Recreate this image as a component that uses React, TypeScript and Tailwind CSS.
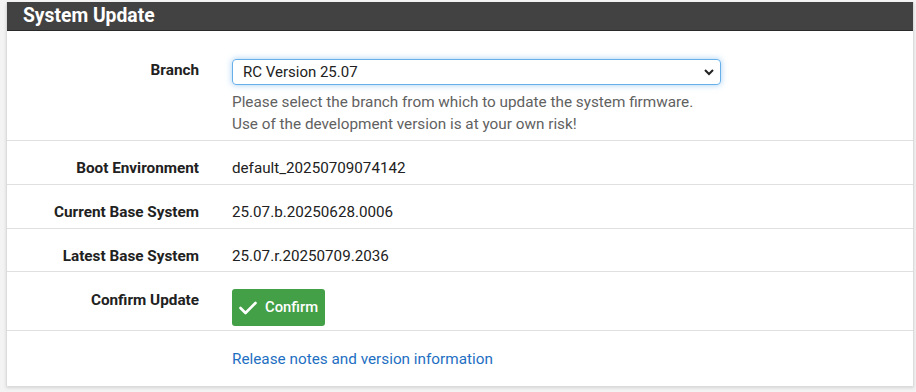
import React from "react";

function Row({ label, children, className }: { label?: string; children: React.ReactNode; className: string }) {
  return (
    <div className={`flex border-b border-[#e0e0e0] ${className}`}>
      <div className="w-[192px] text-right font-bold text-[15.3px] leading-[20px] text-[#212121]">{label}</div>
      <div className="ml-[33px] flex-1">{children}</div>
    </div>
  );
}

export default function App() {
  return (
    <div
      className="w-[916px] h-[392px] bg-[#f3f3f3] pt-[2px] pl-[6px] overflow-hidden"
      style={{ fontFamily: "Roboto, 'Liberation Sans', sans-serif" }}
    >
      <div className="w-[908px] bg-white border-l border-r border-[#dcdcdc] shadow-[0_2px_3px_rgba(0,0,0,0.12)]">
        <div className="h-[29px] bg-[#424242] border-b border-[#2a2a2a] flex items-center pl-[16px]">
          <span className="text-white font-bold text-[19.3px] leading-none">System Update</span>
        </div>
        <Row label="Branch" className="h-[110px] pt-[29px]">
          <div className="-mt-[1px]">
            <div className="w-[489px] h-[26px] rounded-[4px] border border-[#66afe9] shadow-[0_0_6px_rgba(102,175,233,0.6)] flex items-center justify-between pl-[10px] pr-[6px]">
              <span className="text-[15px] text-[#212121]">RC Version 25.07</span>
              <svg width="10" height="8" viewBox="0 0 10 8">
                <path d="M1 2 L5 6 L9 2" stroke="#222" strokeWidth="2" fill="none" />
              </svg>
            </div>
            <div className="mt-[6px] text-[15.3px] leading-[22px] text-[#616161]">
              <div>Please select the branch from which to update the system firmware.</div>
              <div>Use of the development version is at your own risk!</div>
            </div>
          </div>
        </Row>
        <Row label="Boot Environment" className="h-[44px] pt-[17px]">
          <div className="text-[15.2px] leading-[20px] text-[#212121]">default_20250709074142</div>
        </Row>
        <Row label="Current Base System" className="h-[44px] pt-[17px]">
          <div className="text-[15.2px] leading-[20px] text-[#212121]">25.07.b.20250628.0006</div>
        </Row>
        <Row label="Latest Base System" className="h-[43px] pt-[17px]">
          <div className="text-[15.2px] leading-[20px] text-[#212121]">25.07.r.20250709.2036</div>
        </Row>
        <Row label="Confirm Update" className="h-[59px] pt-[18px]">
          <div className="-mt-[1px] w-[93px] h-[37px] rounded-[3px] bg-[#43a047] flex items-center pl-[7px] gap-[8px]">
            <svg width="18" height="14" viewBox="0 0 18 14">
              <path d="M1.5 7 L6.5 12 L16.5 2" stroke="white" strokeWidth="2.6" fill="none" strokeLinecap="round" strokeLinejoin="round" />
            </svg>
            <span className="text-white text-[14.8px] font-medium">Confirm</span>
          </div>
        </Row>
        <div className="flex h-[55px] pt-[18px]">
          <div className="w-[192px]" />
          <a className="ml-[33px] text-[15.3px] leading-[20px] text-[#1e6fc2]">Release notes and version information</a>
        </div>
      </div>
    </div>
  );
}
